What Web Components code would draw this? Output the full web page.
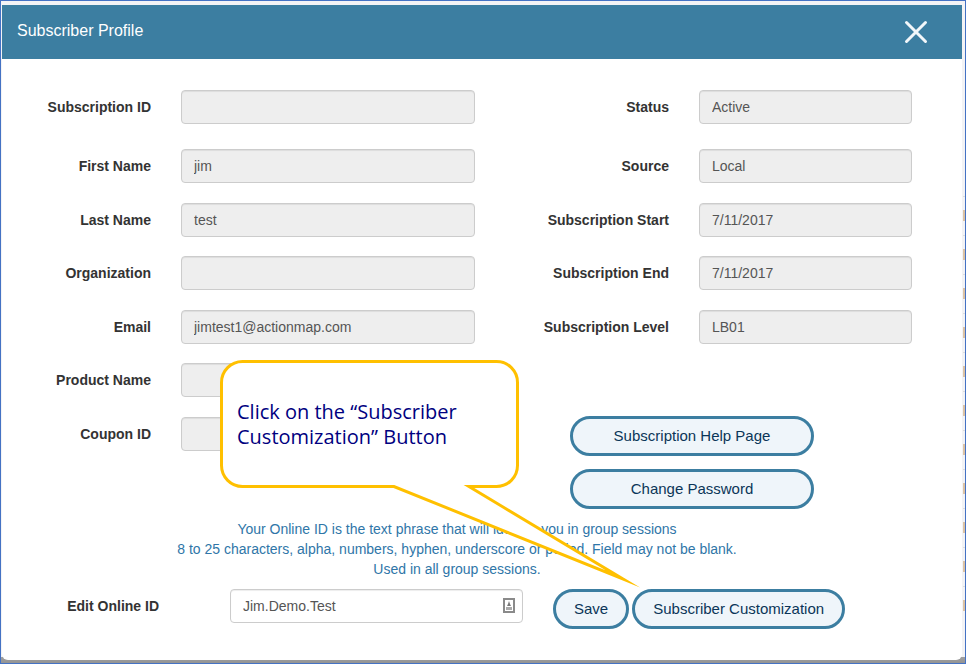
<!DOCTYPE html>
<html lang="en">

<head>
  <meta charset="UTF-8">
  <meta name="viewport" content="width=device-width, initial-scale=1.0">
  <title>Subscriber Profile</title>
  <style>
    * {
      box-sizing: border-box;
    }

    /* The page behind the dialog only shows as a thin edge */
    body {
      display: flex;
      min-height: 100vh;
      margin: 0;
      padding: 4px 3px 3px 1px;
      border: 1px solid #4472c4;
      background:
        linear-gradient(to top, #929292, #a0a0a0 7px, transparent 7px),
        repeating-linear-gradient(#ddd 0 1px, transparent 1px 14px, #dcc3a5 14px 25px, transparent 25px 39px) right 196px / 3px 418px no-repeat,
        #f3f3f5;
      font: 14px/20px "Liberation Sans", Arial, sans-serif;
      color: #333;
    }
  </style>
</head>

<body>
  <profile-dialog heading="Subscriber Profile">
    <subscriber-form></subscriber-form>
    <callout-note slot="note">Click on the “Subscriber Customization” Button</callout-note>
  </profile-dialog>

  <script>
    function render(host, html) {
      const template = document.createElement('template');
      template.innerHTML = `<style>* { box-sizing: border-box; }</style>${html}`;
      host.attachShadow({ mode: 'open' }).appendChild(template.content.cloneNode(true));
    }

    class ProfileDialog extends HTMLElement {
      connectedCallback() {
        render(this, `
      <style>
        :host {
          display: block;
          flex: 1;
          position: relative;
          border-radius: 0 0 6px 6px;
          background: #fff;
        }

        header {
          display: flex;
          justify-content: space-between;
          align-items: center;
          height: 54px;
          padding: 0 32px 0 15px;
          background: #3c7ea1;
          color: #fff;
        }

        h1 {
          margin: 0 0 2px;
          font-size: 16px;
          font-weight: normal;
        }

        button {
          display: flex;
          padding: 0;
          border: 0;
          background: none;
          cursor: pointer;
        }

        svg {
          display: block;
        }
      </style>
      <header>
        <h1>${this.getAttribute('heading')}</h1>
        <button type="button" aria-label="Close">
          <svg width="28" height="28" viewBox="0 0 28 28" fill="none" stroke="#f2f7fa" stroke-width="3" stroke-linecap="round">
            <path d="M4.500 4.500l19 19M23.500 4.500l-19 19" />
          </svg>
        </button>
      </header>
      <slot></slot>
      <slot name="note"></slot>
    `);
      }
    }

    class FormField extends HTMLElement {
      connectedCallback() {
        const editable = this.hasAttribute('editable');
        render(this, `
      <style>
        :host {
          display: grid;
          grid-template-columns: var(--label-width, 149px) minmax(0, 1fr);
          column-gap: var(--label-gap, 30px);
        }

        label {
          padding-top: 7px;
          font-weight: bold;
          text-align: right;
          white-space: nowrap;
        }

        .control {
          display: flex;
          align-items: center;
          height: 34px;
          padding: 0 7px 0 12px;
          border: 1px solid #ccc;
          border-radius: 4px;
          background: #eee;
          box-shadow: inset 0 1px 1px rgba(0, 0, 0, .075);
        }

        .control.editable {
          background: #fff;
        }

        input {
          flex: 1;
          min-width: 0;
          padding: 0;
          border: 0;
          outline: 0;
          background: none;
          font: inherit;
          color: #555;
        }
      </style>
      <label for="field"><slot></slot></label>
      <div class="control ${editable ? 'editable' : ''}">
        <input id="field" type="text" value="${this.getAttribute('value') || ''}" ${editable ? '' : 'readonly'}>
        <slot name="icon"></slot>
      </div>
    `);
      }
    }

    class PillButton extends HTMLElement {
      connectedCallback() {
        render(this, `
      <style>
        :host {
          display: block;
        }

        button {
          width: 100%;
          height: 40px;
          padding: 0 18px;
          border: 3px solid #3c7ea1;
          border-radius: 20px;
          background: #eff5fa;
          font: inherit;
          font-size: 15px;
          color: #0b3558;
          white-space: nowrap;
          cursor: pointer;
        }
      </style>
      <button type="button"><slot></slot></button>
    `);
      }
    }

    class SubscriberForm extends HTMLElement {
      connectedCallback() {
        render(this, `
      <style>
        :host {
          display: block;
          padding: 31px 50px 31px 0;
        }

        .columns {
          display: grid;
          grid-template-columns: 473fr 437fr;
        }

        .fields {
          display: grid;
          gap: 19px;
          align-content: start;
        }

        .fields form-field:first-child {
          margin-bottom: 6px;
        }

        .fields form-field:nth-child(even) {
          margin-bottom: 1px;
        }

        .status {
          --label-width: 194px;
        }

        .actions {
          display: grid;
          gap: 13px;
          margin: 53px 98px 0 95px;
        }

        p {
          margin: 10px 0;
          text-align: center;
          color: #2f76a8;
        }

        .columns + p {
          margin-top: 10px;
        }

        .online {
          display: flex;
          gap: 30px;
          --label-width: 157px;
          --label-gap: 71px;
        }

        .online form-field {
          flex: 0 1 521px;
        }

        .buttons {
          display: flex;
          gap: 3px;
        }

        svg {
          display: block;
        }
      </style>
      <div class="columns">
        <div class="fields">
          <form-field>Subscription ID</form-field>
          <form-field value="jim">First Name</form-field>
          <form-field value="test">Last Name</form-field>
          <form-field>Organization</form-field>
          <form-field value="jimtest1@actionmap.com">Email</form-field>
          <form-field>Product Name</form-field>
          <form-field>Coupon ID</form-field>
        </div>
        <div class="fields status">
          <form-field value="Active">Status</form-field>
          <form-field value="Local">Source</form-field>
          <form-field value="7/11/2017">Subscription Start</form-field>
          <form-field value="7/11/2017">Subscription End</form-field>
          <form-field value="LB01">Subscription Level</form-field>
          <div class="actions">
            <pill-button>Subscription Help Page</pill-button>
            <pill-button>Change Password</pill-button>
          </div>
        </div>
      </div>
      <p>
        Your Online ID is the text phrase that will identify you in group sessions<br>
        8 to 25 characters, alpha, numbers, hyphen, underscore or period. Field may not be blank.<br>
        Used in all group sessions.
      </p>
      <div class="online">
        <form-field value="Jim.Demo.Test" editable>Edit Online ID
          <svg slot="icon" width="12" height="16" viewBox="0 0 12 16" aria-hidden="true">
            <rect x="1" y="1" width="10" height="13" fill="#fff" stroke="#8a8a8a" stroke-width="2" />
            <path d="M6 3l1 3 1 2H4l1-2z" fill="#777" />
            <path d="M3 9h6v3H3z" fill="#aaa" />
          </svg>
        </form-field>
        <div class="buttons">
          <pill-button>Save</pill-button>
          <pill-button>Subscriber Customization</pill-button>
        </div>
      </div>
    `);
      }
    }

    class CalloutNote extends HTMLElement {
      connectedCallback() {
        render(this, `
      <style>
        :host {
          display: block;
          position: absolute;
          z-index: 1;
          top: 355px;
          left: 218px;
          width: 299px;
          height: 128px;
          padding: 39px 32px 0 17px;
          box-sizing: border-box;
          font: 20px/25px "Open Sans", "Noto Sans", sans-serif;
          color: #000080;
          pointer-events: none;
        }

        svg {
          position: absolute;
          top: 0;
          left: 0;
          z-index: -1;
          overflow: visible;
        }
      </style>
      <svg width="299" height="128" viewBox="0 0 299 128" aria-hidden="true">
        <path d="M22.500 1.500H276.500A21 21 0 0 1 297.500 22.500V105.500A21 21 0 0 1 276.500 126.500H249L403 219L174 126.500H22.500A21 21 0 0 1 1.500 105.500V22.500A21 21 0 0 1 22.500 1.500Z"
          fill="#fff" stroke="#ffc000" stroke-width="3" stroke-miterlimit="20" />
      </svg>
      <slot></slot>
    `);
      }
    }

    customElements.define('profile-dialog', ProfileDialog);
    customElements.define('form-field', FormField);
    customElements.define('pill-button', PillButton);
    customElements.define('subscriber-form', SubscriberForm);
    customElements.define('callout-note', CalloutNote);
  </script>
</body>

</html>
